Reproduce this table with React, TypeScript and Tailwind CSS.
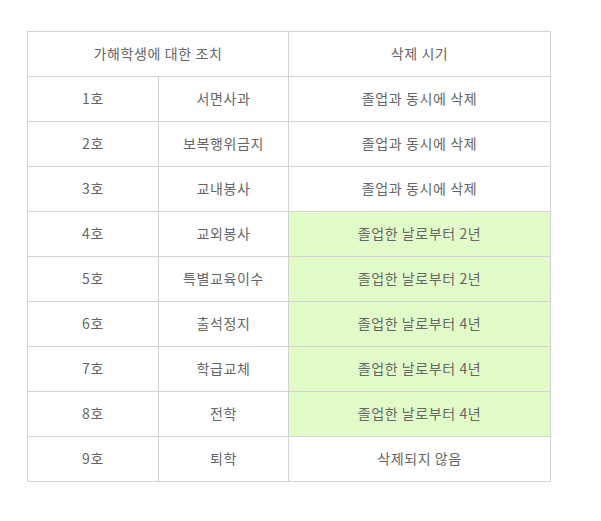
import React from "react";

const rows: [string, string, string, boolean][] = [
  ["1호", "서면사과", "졸업과 동시에 삭제", false],
  ["2호", "보복행위금지", "졸업과 동시에 삭제", false],
  ["3호", "교내봉사", "졸업과 동시에 삭제", false],
  ["4호", "교외봉사", "졸업한 날로부터 2년", true],
  ["5호", "특별교육이수", "졸업한 날로부터 2년", true],
  ["6호", "출석정지", "졸업한 날로부터 4년", true],
  ["7호", "학급교체", "졸업한 날로부터 4년", true],
  ["8호", "전학", "졸업한 날로부터 4년", true],
  ["9호", "퇴학", "삭제되지 않음", false],
];

export default function App() {
  const td =
    "border border-[#d3d3d3] h-[45px] p-0 pb-[2px] text-center align-middle tracking-[0.6px]";
  return (
    <div
      className="w-[601px] h-[521px] bg-white pt-[31px] pl-[27px] text-[14px] text-[#666666]"
      style={{ fontFamily: '"Noto Sans CJK KR", "Noto Sans", sans-serif' }}
    >
      <table className="border-collapse table-fixed w-[523px]">
        <colgroup>
          <col className="w-[131px]" />
          <col className="w-[130px]" />
          <col className="w-[262px]" />
        </colgroup>
        <tbody>
          <tr>
            <td colSpan={2} className={td}>
              가해학생에 대한 조치
            </td>
            <td className={td}>삭제 시기</td>
          </tr>
          {rows.map(([a, b, c, g]) => (
            <tr key={a}>
              <td className={td}>{a}</td>
              <td className={td}>{b}</td>
              <td className={`${td} ${g ? "bg-[#e1fcc8]" : ""}`}>{c}</td>
            </tr>
          ))}
        </tbody>
      </table>
    </div>
  );
}
